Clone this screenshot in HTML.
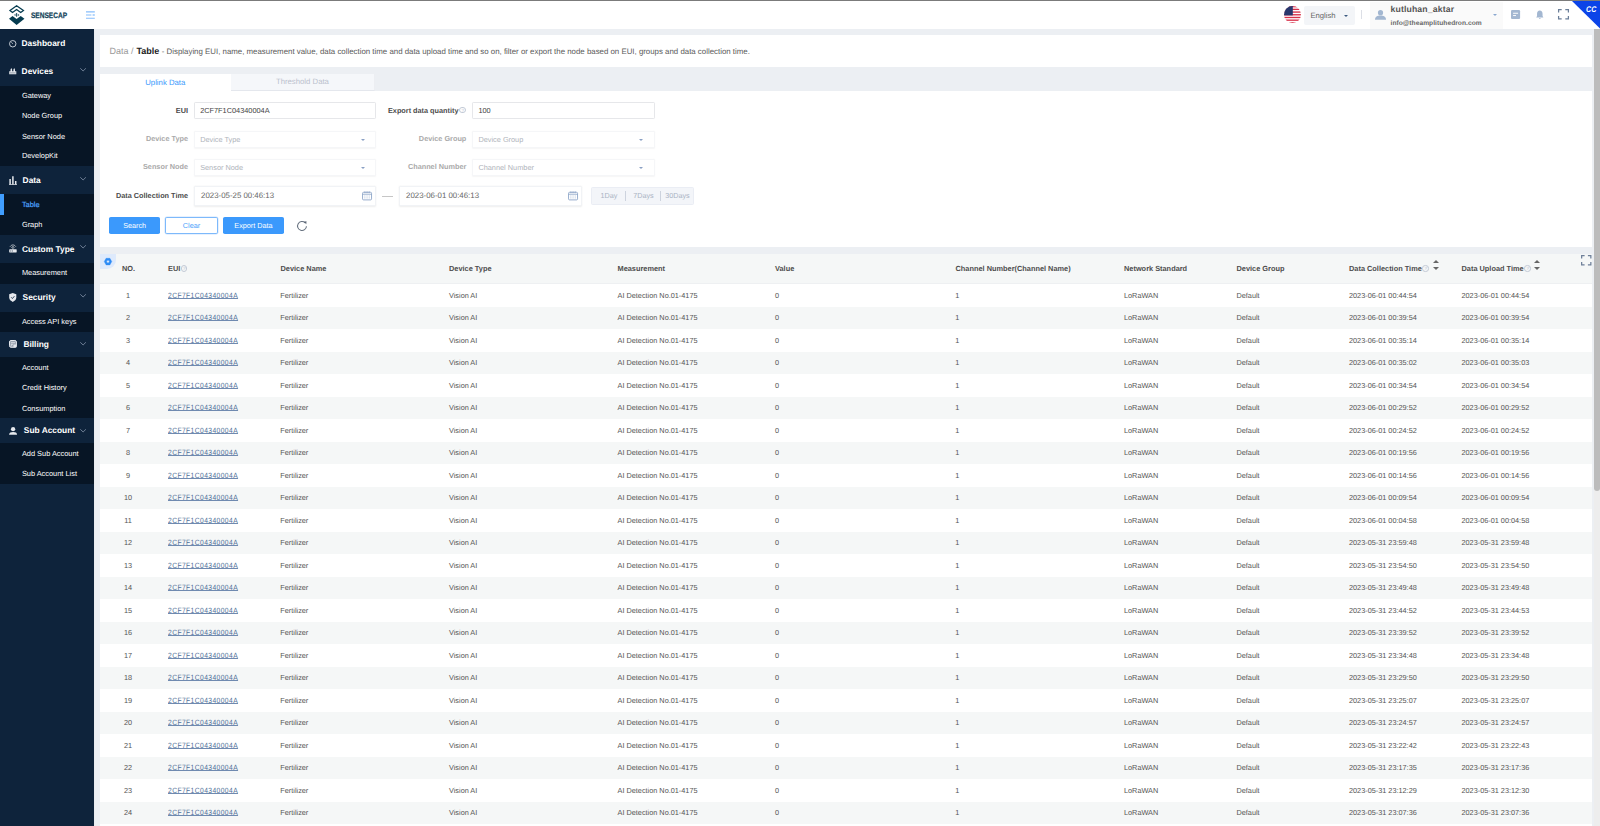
<!DOCTYPE html>
<html lang="en">
<head>
<meta charset="utf-8">
<title>SenseCAP - Data Table</title>
<style>
*{box-sizing:border-box;margin:0;padding:0}
html,body{width:1600px;height:826px;overflow:hidden;background:#eceff3;font-family:"Liberation Sans",sans-serif;font-size:8px;color:#555;text-rendering:geometricPrecision}
body{position:relative}
.abs{position:absolute}
svg{display:block;overflow:visible}
#topline{left:0;top:0;width:1600px;height:1px;background:#7b7b7b;z-index:3}
#header{left:0;top:1px;width:1600px;height:28.2px;background:#fff;z-index:2}
#sidebar{left:0;top:29px;width:93.75px;height:797px;background:#0e233b;color:#fff;box-shadow:0.3px 0 0.6px rgba(0,0,0,.35)}
#main{left:93.75px;top:29px;width:1500.25px;height:797px}
/* sidebar */
.mi{position:absolute;left:0;width:93.75px}
.mi .ic{position:absolute}
.mi .t{position:absolute;transform:translateY(-50%);font-weight:bold;font-size:8.4px;line-height:10px;white-space:nowrap}
.mi .ar{position:absolute}
.sub{position:absolute;left:0;width:93.75px;background:#071525}
.sub span{position:absolute;left:21.9px;transform:translateY(-50%);font-size:7.4px;line-height:9px;white-space:nowrap;color:#fff}
.sub span.act{color:#4da2ff;-webkit-text-stroke:0.2px #4da2ff}
.sub i{position:absolute;left:0;width:4.4px;background:#409eff}
/* header */
#logo{left:0;top:-1px}
#brand{left:31px;top:9.7px;font-family:"Liberation Sans",sans-serif;font-weight:bold;font-size:7.9px;line-height:9px;color:#14455a;-webkit-text-stroke:0.25px #14455a;letter-spacing:0;transform:scaleX(0.83);transform-origin:0 0;white-space:nowrap}
#burger{left:85.5px;top:10px}
#flag{left:1283.6px;top:5px;width:17.2px;height:17.2px;border-radius:50%;overflow:hidden}
#lang{left:1304px;top:5px;width:50.6px;height:19px;background:#f3f5f8;border-radius:2px}
#lang span{position:absolute;left:6.4px;top:4.8px;font-size:7.7px;color:#666}
#lang i{position:absolute;left:39.9px;top:8.9px;width:0;height:0;border-left:2.1px solid transparent;border-right:2.1px solid transparent;border-top:2.4px solid #3c5a80}
#hsep{left:1361px;top:9.2px;width:1px;height:8.5px;background:#dcdfe6}
#user{left:1369.5px;top:1px;width:133px;height:27px;background:#fafafa}
#user .av{position:absolute;left:5.5px;top:8.1px}
#user .n{position:absolute;left:21px;top:2.3px;font-size:8.66px;font-weight:bold;color:#555;white-space:nowrap;letter-spacing:0.15px}
#user .e{position:absolute;left:21px;top:17.8px;font-size:6.65px;font-weight:bold;color:#686868;white-space:nowrap;letter-spacing:0.04px}
#user i{position:absolute;left:123.1px;top:12.4px;width:0;height:0;border-left:2.2px solid transparent;border-right:2.2px solid transparent;border-top:2.4px solid #8aa8cf}
#hic1{left:1511px;top:9.4px}
#hic2{left:1536px;top:9.3px}
#hic3{left:1558px;top:8.2px}
#cc{left:1572px;top:0;width:28px;height:27.5px}
/* main */
#crumb{left:6.25px;top:6.25px;width:1492px;height:31.5px;background:#fff}
#crumb p{position:absolute;left:9.4px;top:10.8px;white-space:nowrap;font-size:7.87px;color:#5a5a5a}
#crumb p .g{color:#999;font-size:9px}
#crumb p b{color:#222;font-size:9px;margin-left:0.9px;margin-right:0.3px}
#card{left:6.25px;top:44.75px;width:1492px;height:173.5px;background:#fff}
#tabs{left:0;top:0;width:1492px;height:17px;background:#eceff3}
#tabs .t1{left:0;top:0;width:130.5px;height:17px;background:#fff;color:#3b99fc;text-align:center;line-height:18px;font-size:7.75px}
#tabs .t2{left:130.5px;top:0;width:144.9px;height:16.8px;background:#f5f7fa;border-bottom:1px solid #e4e7ed;border-right:1px solid #eceef2;color:#bac1cd;text-align:center;line-height:16.2px;font-size:7.75px}
.lbl{position:absolute;text-align:right;white-space:nowrap;font-size:7.3px;line-height:9px;color:#4c4c4c;font-weight:bold}
.lbl.d{color:#aaa}
.inp{position:absolute;background:#fff;border:1px solid #e6e7ea;border-radius:1.2px;font-size:7.35px;color:#444;white-space:nowrap}
.inp span{position:absolute;left:5.4px;top:50%;transform:translateY(-50%)}
.inp.d{border-color:#f5f6f8;color:#b0b4bb;box-shadow:0 0.5px 1.5px rgba(0,0,0,.04)}
.inp.d i{position:absolute;right:10.6px;top:50%;margin-top:-0.4px;width:0;height:0;border-left:2px solid transparent;border-right:2px solid transparent;border-top:2.2px solid #8aa0c4}
.inp.dt{border-color:#f1f3f6;color:#666;font-size:7.86px;box-shadow:0 0.7px 2px rgba(0,0,0,.07)}
.inp.dt svg{position:absolute;right:3.05px;top:50%;margin-top:-4.55px}
.btn{position:absolute;top:143.5px;height:16.9px;border-radius:1.8px;background:#3b99fc;color:#fff;text-align:center;line-height:18.8px;font-size:7.25px}
.btn.o{background:#fff;border:1px solid #7db9fb;color:#4a9ffb;line-height:16.8px;box-shadow:0 0 0 0.5px #cfe4fd}
#quick{left:490.75px;top:113.25px;width:103.5px;height:17.5px;background:#f3f5f9;border:1px solid #eaedf4;border-radius:1.5px;color:#aab4c4;font-size:7.2px}
#quick span{position:absolute;top:0;line-height:15.5px;text-align:center}
#quick u{position:absolute;top:2.8px;width:1px;height:10px;background:#cdd3de}
/* table */
#tbl{left:6.25px;top:225.25px;width:1492px;height:580px;background:#fff}
#th{left:0;top:0;width:1492px;height:30px;background:#f5f7f7;font-weight:bold;color:#4e4e4e;border-bottom:1px solid #eef0f2}
#th span{position:absolute;top:9.7px;white-space:nowrap;font-size:7.38px;line-height:9px}
.tr{position:relative;height:22.5px;width:1492px;background:#fff}
.tr.alt{background:#f5f7f7}
.tr span{position:absolute;top:6.5px;white-space:nowrap;font-size:7.3px;color:#555;line-height:9px}
.c0{left:15px;width:26px;text-align:center}
.c1{left:67.8px}
.c1 a{font-family:"Liberation Sans",sans-serif;display:inline-block;transform:scaleX(0.88);transform-origin:0 50%;font-size:7.6px;letter-spacing:0.49px;color:#4f6f98;text-decoration:underline;text-underline-offset:0.3px;text-decoration-thickness:0.5px;text-decoration-color:#6f8ab0}
.c2{left:180.3px}.c3{left:349px}.c4{left:517.6px}.c5{left:675px}.c6{left:855.3px}.c7{left:1024px}.c8{left:1136.5px}.c9{left:1249px}.c10{left:1361.5px}
#gear{left:0;top:0;width:15.8px;height:14.8px;background:#deeafc;border-radius:0 0 9px 0}
#fs{left:1481.4px;top:0.3px}
.q{display:inline-block;width:6.4px;height:6.4px;border:0.7px solid #c3cad6;border-radius:50%;vertical-align:-0.9px;margin-left:0.5px;position:relative}
.q.abs{position:absolute}
.q:after{content:"?";position:absolute;left:0;top:0;width:5px;text-align:center;font-size:4.6px;line-height:5.2px;color:#c3cad6;font-weight:normal;letter-spacing:0}
.sort{position:absolute;width:5px}
.sort:before,.sort:after{content:"";position:absolute;left:0;width:0;height:0;border-left:3.3px solid transparent;border-right:3.3px solid transparent}
.sort:before{top:0;border-bottom:3.8px solid #666}
.sort:after{top:6.6px;border-top:3.8px solid #666}
#sbar{width:6px;height:797px;background:#ededed}
#sbar div{position:absolute;left:0;top:0;width:6px;height:462px;background:#bcbcbc;border-radius:0 0 3px 3px}

</style>
</head>
<body>
<div id="topline" class="abs"></div>
<div id="header" class="abs">
  <svg id="logo" class="abs" width="30" height="30" viewBox="0 0 30 30">
    <path d="M16.6 5.75 L23.45 10.5 L20.7 12.45 L16.6 9.45 L12.5 12.45 L9.95 10.5 Z" fill="none" stroke="#063c50" stroke-width="1.25" stroke-linejoin="miter"/>
    <path d="M16.65 13.05V16.75" stroke="#063c50" stroke-width="0.95" fill="none"/>
    <path d="M15.6 13.8V16" stroke="#063c50" stroke-width="0.45" fill="none"/>
    <path d="M14.95 14.2V15.6L14 14.9ZM17.8 13.9V15.9L19.5 14.9Z" fill="#063c50"/>
    <path d="M9 18.7 L12.5 16 L16.6 19 L20.7 16 L24.46 18.7 L16.6 25 Z" fill="#063c50"/>
  </svg>
  <div id="brand" class="abs">SENSECAP</div>
  <svg id="burger" class="abs" width="9" height="8" viewBox="0 0 9 8">
    <path d="M0 0.8h8.8M0 4h5.4M0 7.2h8.8" stroke="#86bdfb" stroke-width="1.15" fill="none"/>
    <path d="M6.6 4h2.2" stroke="#86bdfb" stroke-width="1.3" fill="none"/>
  </svg>
  <div id="flag" class="abs">
    <svg width="17.5" height="17.5" viewBox="0 0 17.5 17.5">
      <rect width="17.5" height="17.5" fill="#fff"/>
      <g fill="#d8304a">
        <rect y="0" width="17.5" height="1.35"/><rect y="2.7" width="17.5" height="1.35"/><rect y="5.4" width="17.5" height="1.35"/><rect y="8.1" width="17.5" height="1.35"/><rect y="10.8" width="17.5" height="1.35"/><rect y="13.5" width="17.5" height="1.35"/><rect y="16.2" width="17.5" height="1.35"/>
      </g>
      <rect width="8.8" height="9.4" fill="#27376d"/>
    </svg>
  </div>
  <div id="lang" class="abs"><span>English</span><i></i></div>
  <div id="hsep" class="abs"></div>
  <div id="user" class="abs">
    <svg class="av" width="11" height="10" viewBox="0 0 11 10"><circle cx="5.5" cy="2.7" r="2.6" fill="#a3b7d1"/><path d="M0 9.8C0 6.6 2.4 5.6 5.5 5.6S11 6.6 11 9.8Z" fill="#a3b7d1"/></svg>
    <div class="n">kutluhan_aktar</div>
    <div class="e">info@theamplituhedron.com</div>
    <i></i>
  </div>
  <svg id="hic1" class="abs" width="9.1" height="9.1" viewBox="0 0 9.5 9.5"><rect width="9.5" height="9.5" rx="1.2" fill="#a3b7d1"/><path d="M2.2 3.4h5.2M2.2 5.8h3" stroke="#fff" stroke-width="1" fill="none"/></svg>
  <svg id="hic2" class="abs" width="7.6" height="10" viewBox="0 0 8 10"><path d="M4 0.3C2.1 0.3 1.1 1.8 1.1 3.6V6L0.2 7.6H7.8L6.9 6V3.6C6.9 1.8 5.9 0.3 4 0.3Z" fill="#a3b7d1"/><path d="M3.1 8.3h1.8a0.9 0.9 0 0 1-1.8 0Z" fill="#a3b7d1"/></svg>
  <svg id="hic3" class="abs" width="11" height="10.5" viewBox="0 0 11 10.5"><path d="M0.6 3.4V0.6H3.7M7.3 0.6H10.4V3.4M10.4 7.1V9.9H7.3M3.7 9.9H0.6V7.1" stroke="#6b7f99" stroke-width="1.25" fill="none"/></svg>
  <svg id="cc" class="abs" width="28" height="27.5" viewBox="0 0 28 27.5"><path d="M0 0H28V27.5Z" fill="#0b44e8"/><text x="14.1" y="10.6" font-family="Liberation Sans, sans-serif" font-size="8.3" font-weight="bold" font-style="italic" fill="#fff" textLength="10.2" lengthAdjust="spacingAndGlyphs">CC</text></svg>
</div>

<div id="sidebar" class="abs">
  <div class="mi" style="top:0.00px;height:28.40px"><svg class="ic" style="left:8.6px;top:10.80px" width="7.5" height="7.5" viewBox="0 0 7.2 7.2"><circle cx="3.6" cy="3.6" r="3.1" fill="none" stroke="#e6e9ee" stroke-width="0.8"/><path d="M2.3 2.2L3.7 3.7" stroke="#e6e9ee" stroke-width="0.7"/></svg><span class="t" style="left:21.5px;top:14.30px">Dashboard</span></div>
  <div class="mi" style="top:28.40px;height:28.50px"><svg class="ic" style="left:8.9px;top:10.70px" width="7.5" height="6.4" viewBox="0 0 7.5 6.4"><path d="M0.2 6.3V3.3H7.3V6.3ZM1.5 3.3V1.4L2.3 0.1L3.1 1.4V3.3ZM4.4 3.3V1.4L5.2 0.1L6 1.4V3.3Z" fill="#e6e9ee"/><path d="M0.8 4.9H6.7" stroke="#0e233b" stroke-width="0.4"/></svg><span class="t" style="left:21.6px;top:13.90px">Devices</span><svg class="ar" style="left:79.7px;top:10.70px" width="6.2" height="3.5" viewBox="0 0 6.2 3.5"><path d="M0.3 0.3L3.1 3L5.9 0.3" stroke="#8e9db2" stroke-width="0.75" fill="none"/></svg></div>
  <div class="mi" style="top:137.00px;height:28.30px"><svg class="ic" style="left:8.8px;top:9.90px" width="8" height="9" viewBox="0 0 8 9"><path d="M1.1 3V8.4M3.9 0.2V8.4M6.7 5V8.4" stroke="#e6e9ee" stroke-width="1.5" fill="none"/><path d="M0 8.5H8" stroke="#e6e9ee" stroke-width="0.7"/></svg><span class="t" style="left:22.6px;top:14.20px">Data</span><svg class="ar" style="left:79.7px;top:10.70px" width="6.2" height="3.5" viewBox="0 0 6.2 3.5"><path d="M0.3 0.3L3.1 3L5.9 0.3" stroke="#8e9db2" stroke-width="0.75" fill="none"/></svg></div>
  <div class="mi" style="top:205.80px;height:28.05px"><svg class="ic" style="left:8.5px;top:9.50px" width="7.9" height="8.8" viewBox="0 0 7.9 8.8"><path d="M1.1 2.6C2.7 0.4 5.2 0.4 6.8 2.6M2.4 3.6C3.3 2.4 4.6 2.4 5.5 3.6" stroke="#e6e9ee" stroke-width="0.75" fill="none"/><path d="M3.95 3.4V5.4" stroke="#e6e9ee" stroke-width="0.8"/><rect x="0.2" y="5.3" width="7.5" height="3.3" rx="0.5" fill="#e6e9ee"/><path d="M1.2 7H2.2M2.9 7H3.9" stroke="#0e233b" stroke-width="0.7"/></svg><span class="t" style="left:22.0px;top:14.20px">Custom Type</span><svg class="ar" style="left:79.7px;top:10.70px" width="6.2" height="3.5" viewBox="0 0 6.2 3.5"><path d="M0.3 0.3L3.1 3L5.9 0.3" stroke="#8e9db2" stroke-width="0.75" fill="none"/></svg></div>
  <div class="mi" style="top:254.80px;height:28.20px"><svg class="ic" style="left:8.7px;top:9.20px" width="7.5" height="9" viewBox="0 0 7.5 9"><path d="M3.75 0.1L7.3 1.3V4.6C7.3 6.7 5.6 8.1 3.75 8.9C1.9 8.1 0.2 6.7 0.2 4.6V1.3Z" fill="#e6e9ee"/><path d="M2.2 4.3L3.4 5.5L5.4 3.2" stroke="#0e233b" stroke-width="0.85" fill="none"/></svg><span class="t" style="left:22.6px;top:13.50px">Security</span><svg class="ar" style="left:79.7px;top:10.10px" width="6.2" height="3.5" viewBox="0 0 6.2 3.5"><path d="M0.3 0.3L3.1 3L5.9 0.3" stroke="#8e9db2" stroke-width="0.75" fill="none"/></svg></div>
  <div class="mi" style="top:302.80px;height:25.40px"><svg class="ic" style="left:9.1px;top:8.40px" width="7.9" height="7.8" viewBox="0 0 7.9 7.8"><rect x="0.5" y="0.5" width="6.9" height="6.8" rx="1.5" fill="#9aa4b1" stroke="#e6e9ee" stroke-width="1"/><path d="M2 2.7H6M2 4.3H4" stroke="#e6e9ee" stroke-width="0.8"/><rect x="4.5" y="4.5" width="3" height="2.9" fill="#e6e9ee"/><path d="M2.3 4.3V6.2" stroke="#e6e9ee" stroke-width="0.7"/></svg><span class="t" style="left:23.4px;top:12.20px">Billing</span><svg class="ar" style="left:79.7px;top:10.40px" width="6.2" height="3.5" viewBox="0 0 6.2 3.5"><path d="M0.3 0.3L3.1 3L5.9 0.3" stroke="#8e9db2" stroke-width="0.75" fill="none"/></svg></div>
  <div class="mi" style="top:388.90px;height:25.50px"><svg class="ic" style="left:8.8px;top:8.80px" width="8.2" height="7.8" viewBox="0 0 8.2 7.8"><circle cx="4.1" cy="2.2" r="2.15" fill="#e6e9ee"/><path d="M0.1 7.7C0.1 5.6 1.8 4.9 4.1 4.9S8.1 5.6 8.1 7.7Z" fill="#e6e9ee"/></svg><span class="t" style="left:23.8px;top:12.40px">Sub Account</span><svg class="ar" style="left:79.9px;top:10.70px" width="6.2" height="3.5" viewBox="0 0 6.2 3.5"><path d="M0.3 0.3L3.1 3L5.9 0.3" stroke="#8e9db2" stroke-width="0.75" fill="none"/></svg></div>
  <div class="sub" style="top:56.90px;height:80.10px">
    <span style="top:9.10px">Gateway</span>
    <span style="top:29.10px">Node Group</span>
    <span style="top:50.00px">Sensor Node</span>
    <span style="top:69.40px">DevelopKit</span>
  </div>
  <div class="sub" style="top:165.30px;height:40.50px">
    <i style="top:0;height:20.25px"></i><span class="act" style="top:9.60px">Table</span>
    <span style="top:30.20px">Graph</span>
  </div>
  <div class="sub" style="top:233.85px;height:20.95px">
    <span style="top:9.65px">Measurement</span>
  </div>
  <div class="sub" style="top:283.00px;height:19.80px">
    <span style="top:9.40px">Access API keys</span>
  </div>
  <div class="sub" style="top:328.20px;height:60.70px">
    <span style="top:10.20px">Account</span>
    <span style="top:29.90px">Credit History</span>
    <span style="top:50.80px">Consumption</span>
  </div>
  <div class="sub" style="top:414.40px;height:40.30px">
    <span style="top:9.80px">Add Sub Account</span>
    <span style="top:29.80px">Sub Account List</span>
  </div>
</div>

<div id="main" class="abs">
  <div id="crumb" class="abs"><p><span class="g">Data /</span> <b>Table</b> - Displaying EUI, name, measurement value, data collection time and data upload time and so on, filter or export the node based on EUI, groups and data collection time.</p></div>
  <div id="card" class="abs">
    <div id="tabs" class="abs"><div class="t1 abs">Uplink Data</div><div class="t2 abs">Threshold Data</div></div>
    <div class="lbl" style="right:1404px;top:31.8px">EUI</div>
    <div class="inp" style="left:93.75px;top:28.5px;width:182.7px;height:16.25px"><span>2CF7F1C04340004A</span></div>
    <div class="lbl" style="right:1133.5px;top:31.8px">Export data quantity</div>
    <div class="q abs" style="left:359.3px;top:33.1px;margin:0"></div>
    <div class="inp" style="left:372px;top:28px;width:183px;height:17px"><span>100</span></div>

    <div class="lbl d" style="right:1404px;top:60.2px">Device Type</div>
    <div class="inp d" style="left:93.75px;top:57px;width:182.7px;height:17.4px"><span>Device Type</span><i></i></div>
    <div class="lbl d" style="right:1125.7px;top:60.2px">Device Group</div>
    <div class="inp d" style="left:372px;top:56.9px;width:183px;height:17.6px"><span>Device Group</span><i></i></div>

    <div class="lbl d" style="right:1404px;top:88.7px">Sensor Node</div>
    <div class="inp d" style="left:93.75px;top:84.9px;width:182.7px;height:17.4px"><span>Sensor Node</span><i></i></div>
    <div class="lbl d" style="right:1125.7px;top:88.7px">Channel Number</div>
    <div class="inp d" style="left:372px;top:84.9px;width:183px;height:17.6px"><span>Channel Number</span><i></i></div>

    <div class="lbl" style="right:1404px;top:117.2px">Data Collection Time</div>
    <div class="inp dt" style="left:93.75px;top:112.7px;width:182.7px;height:19.1px"><span style="left:6.3px;margin-top:-0.5px">2023-05-25 00:46:13</span><svg width="10.1" height="9.5" viewBox="0 0 10.1 9.5"><rect x="0.55" y="1.3" width="9" height="7.6" rx="1" fill="none" stroke="#8ba4c7" stroke-width="0.9"/><path d="M0.55 3.25H9.55" stroke="#8ba4c7" stroke-width="0.8"/><path d="M2.9 0.2V2.2M5.05 0.2V2.2M7.2 0.2V2.2" stroke="#8ba4c7" stroke-width="0.7"/><path d="M2.5 5H3.3M4.65 5H5.45M6.8 5H7.6M2.5 6.9H3.3M4.65 6.9H5.45M6.8 6.9H7.6" stroke="#8ba4c7" stroke-width="0.8"/></svg></div>
    <div class="abs" style="left:281.9px;top:121.85px;width:11.1px;height:1.25px;background:#c6c6c6"></div>
    <div class="inp dt" style="left:298.75px;top:112.7px;width:183px;height:19.1px"><span style="left:6.3px;margin-top:-0.5px">2023-06-01 00:46:13</span><svg width="10.1" height="9.5" viewBox="0 0 10.1 9.5"><rect x="0.55" y="1.3" width="9" height="7.6" rx="1" fill="none" stroke="#8ba4c7" stroke-width="0.9"/><path d="M0.55 3.25H9.55" stroke="#8ba4c7" stroke-width="0.8"/><path d="M2.9 0.2V2.2M5.05 0.2V2.2M7.2 0.2V2.2" stroke="#8ba4c7" stroke-width="0.7"/><path d="M2.5 5H3.3M4.65 5H5.45M6.8 5H7.6M2.5 6.9H3.3M4.65 6.9H5.45M6.8 6.9H7.6" stroke="#8ba4c7" stroke-width="0.8"/></svg></div>
    <div id="quick" class="abs"><span style="left:0;width:34.5px">1Day</span><u style="left:33.6px"></u><span style="left:34.5px;width:34.3px">7Days</span><u style="left:67.8px"></u><span style="left:68.8px;width:33.7px">30Days</span></div>

    <div class="btn" style="left:9.25px;width:50.75px">Search</div>
    <div class="btn o" style="left:65.25px;width:52.5px">Clear</div>
    <div class="btn" style="left:123px;width:61px">Export Data</div>
    <svg class="abs" style="left:195.7px;top:146.3px" width="12" height="12" viewBox="0 0 12 12"><path d="M9.15 2.85A4.45 4.45 0 1 0 10.45 6.2" stroke="#66717f" stroke-width="1.05" fill="none"/><path d="M7.7 1.7L10.5 1.3L10.3 4.2Z" fill="#5b6675"/></svg>
  </div>
  <div id="tbl" class="abs">
    <div id="th" class="abs">
      <span style="left:22px">NO.</span>
      <span style="left:68px">EUI<i class="q"></i></span>
      <span style="left:180.5px">Device Name</span>
      <span style="left:349px">Device Type</span>
      <span style="left:517.5px">Measurement</span>
      <span style="left:675px">Value</span>
      <span style="left:855.5px">Channel Number(Channel Name)</span>
      <span style="left:1024px">Network Standard</span>
      <span style="left:1136.5px">Device Group</span>
      <span style="left:1249px">Data Collection Time<i class="q"></i></span>
      <span style="left:1361.5px">Data Upload Time<i class="q"></i></span>
      <div class="sort" style="left:1332.6px;top:6.1px"></div>
      <div class="sort" style="left:1434.35px;top:6.1px"></div>
    </div>
    <div id="gear" class="abs"><svg class="abs" style="left:4.1px;top:3.8px" width="8" height="7.2" viewBox="0 0 8 7.2"><path d="M0.25 3.6L2.1 0.3H5.9L7.75 3.6L5.9 6.9H2.1Z M4 2.2A1.4 1.4 0 1 0 4 5A1.4 1.4 0 1 0 4 2.2Z" fill="#2d8cf5" fill-rule="evenodd" stroke="#2d8cf5" stroke-width="0.4" stroke-linejoin="round"/></svg></div>
    <svg id="fs" class="abs" width="10.5" height="10.5" viewBox="0 0 10.5 10.5"><path d="M0.65 3.4V0.65H3.6M6.9 0.65H9.85V3.4M9.85 7.1V9.85H6.9M3.6 9.85H0.65V7.1" stroke="#6e7f99" stroke-width="1.25" fill="none"/></svg>
    <div class="abs" style="left:0;top:30px">
<div class="tr"><span class="c0">1</span><span class="c1"><a>2CF7F1C04340004A</a></span><span class="c2">Fertilizer</span><span class="c3">Vision AI</span><span class="c4">AI Detection No.01-4175</span><span class="c5">0</span><span class="c6">1</span><span class="c7">LoRaWAN</span><span class="c8">Default</span><span class="c9">2023-06-01 00:44:54</span><span class="c10">2023-06-01 00:44:54</span></div>
<div class="tr alt"><span class="c0">2</span><span class="c1"><a>2CF7F1C04340004A</a></span><span class="c2">Fertilizer</span><span class="c3">Vision AI</span><span class="c4">AI Detection No.01-4175</span><span class="c5">0</span><span class="c6">1</span><span class="c7">LoRaWAN</span><span class="c8">Default</span><span class="c9">2023-06-01 00:39:54</span><span class="c10">2023-06-01 00:39:54</span></div>
<div class="tr"><span class="c0">3</span><span class="c1"><a>2CF7F1C04340004A</a></span><span class="c2">Fertilizer</span><span class="c3">Vision AI</span><span class="c4">AI Detection No.01-4175</span><span class="c5">0</span><span class="c6">1</span><span class="c7">LoRaWAN</span><span class="c8">Default</span><span class="c9">2023-06-01 00:35:14</span><span class="c10">2023-06-01 00:35:14</span></div>
<div class="tr alt"><span class="c0">4</span><span class="c1"><a>2CF7F1C04340004A</a></span><span class="c2">Fertilizer</span><span class="c3">Vision AI</span><span class="c4">AI Detection No.01-4175</span><span class="c5">0</span><span class="c6">1</span><span class="c7">LoRaWAN</span><span class="c8">Default</span><span class="c9">2023-06-01 00:35:02</span><span class="c10">2023-06-01 00:35:03</span></div>
<div class="tr"><span class="c0">5</span><span class="c1"><a>2CF7F1C04340004A</a></span><span class="c2">Fertilizer</span><span class="c3">Vision AI</span><span class="c4">AI Detection No.01-4175</span><span class="c5">0</span><span class="c6">1</span><span class="c7">LoRaWAN</span><span class="c8">Default</span><span class="c9">2023-06-01 00:34:54</span><span class="c10">2023-06-01 00:34:54</span></div>
<div class="tr alt"><span class="c0">6</span><span class="c1"><a>2CF7F1C04340004A</a></span><span class="c2">Fertilizer</span><span class="c3">Vision AI</span><span class="c4">AI Detection No.01-4175</span><span class="c5">0</span><span class="c6">1</span><span class="c7">LoRaWAN</span><span class="c8">Default</span><span class="c9">2023-06-01 00:29:52</span><span class="c10">2023-06-01 00:29:52</span></div>
<div class="tr"><span class="c0">7</span><span class="c1"><a>2CF7F1C04340004A</a></span><span class="c2">Fertilizer</span><span class="c3">Vision AI</span><span class="c4">AI Detection No.01-4175</span><span class="c5">0</span><span class="c6">1</span><span class="c7">LoRaWAN</span><span class="c8">Default</span><span class="c9">2023-06-01 00:24:52</span><span class="c10">2023-06-01 00:24:52</span></div>
<div class="tr alt"><span class="c0">8</span><span class="c1"><a>2CF7F1C04340004A</a></span><span class="c2">Fertilizer</span><span class="c3">Vision AI</span><span class="c4">AI Detection No.01-4175</span><span class="c5">0</span><span class="c6">1</span><span class="c7">LoRaWAN</span><span class="c8">Default</span><span class="c9">2023-06-01 00:19:56</span><span class="c10">2023-06-01 00:19:56</span></div>
<div class="tr"><span class="c0">9</span><span class="c1"><a>2CF7F1C04340004A</a></span><span class="c2">Fertilizer</span><span class="c3">Vision AI</span><span class="c4">AI Detection No.01-4175</span><span class="c5">0</span><span class="c6">1</span><span class="c7">LoRaWAN</span><span class="c8">Default</span><span class="c9">2023-06-01 00:14:56</span><span class="c10">2023-06-01 00:14:56</span></div>
<div class="tr alt"><span class="c0">10</span><span class="c1"><a>2CF7F1C04340004A</a></span><span class="c2">Fertilizer</span><span class="c3">Vision AI</span><span class="c4">AI Detection No.01-4175</span><span class="c5">0</span><span class="c6">1</span><span class="c7">LoRaWAN</span><span class="c8">Default</span><span class="c9">2023-06-01 00:09:54</span><span class="c10">2023-06-01 00:09:54</span></div>
<div class="tr"><span class="c0">11</span><span class="c1"><a>2CF7F1C04340004A</a></span><span class="c2">Fertilizer</span><span class="c3">Vision AI</span><span class="c4">AI Detection No.01-4175</span><span class="c5">0</span><span class="c6">1</span><span class="c7">LoRaWAN</span><span class="c8">Default</span><span class="c9">2023-06-01 00:04:58</span><span class="c10">2023-06-01 00:04:58</span></div>
<div class="tr alt"><span class="c0">12</span><span class="c1"><a>2CF7F1C04340004A</a></span><span class="c2">Fertilizer</span><span class="c3">Vision AI</span><span class="c4">AI Detection No.01-4175</span><span class="c5">0</span><span class="c6">1</span><span class="c7">LoRaWAN</span><span class="c8">Default</span><span class="c9">2023-05-31 23:59:48</span><span class="c10">2023-05-31 23:59:48</span></div>
<div class="tr"><span class="c0">13</span><span class="c1"><a>2CF7F1C04340004A</a></span><span class="c2">Fertilizer</span><span class="c3">Vision AI</span><span class="c4">AI Detection No.01-4175</span><span class="c5">0</span><span class="c6">1</span><span class="c7">LoRaWAN</span><span class="c8">Default</span><span class="c9">2023-05-31 23:54:50</span><span class="c10">2023-05-31 23:54:50</span></div>
<div class="tr alt"><span class="c0">14</span><span class="c1"><a>2CF7F1C04340004A</a></span><span class="c2">Fertilizer</span><span class="c3">Vision AI</span><span class="c4">AI Detection No.01-4175</span><span class="c5">0</span><span class="c6">1</span><span class="c7">LoRaWAN</span><span class="c8">Default</span><span class="c9">2023-05-31 23:49:48</span><span class="c10">2023-05-31 23:49:48</span></div>
<div class="tr"><span class="c0">15</span><span class="c1"><a>2CF7F1C04340004A</a></span><span class="c2">Fertilizer</span><span class="c3">Vision AI</span><span class="c4">AI Detection No.01-4175</span><span class="c5">0</span><span class="c6">1</span><span class="c7">LoRaWAN</span><span class="c8">Default</span><span class="c9">2023-05-31 23:44:52</span><span class="c10">2023-05-31 23:44:53</span></div>
<div class="tr alt"><span class="c0">16</span><span class="c1"><a>2CF7F1C04340004A</a></span><span class="c2">Fertilizer</span><span class="c3">Vision AI</span><span class="c4">AI Detection No.01-4175</span><span class="c5">0</span><span class="c6">1</span><span class="c7">LoRaWAN</span><span class="c8">Default</span><span class="c9">2023-05-31 23:39:52</span><span class="c10">2023-05-31 23:39:52</span></div>
<div class="tr"><span class="c0">17</span><span class="c1"><a>2CF7F1C04340004A</a></span><span class="c2">Fertilizer</span><span class="c3">Vision AI</span><span class="c4">AI Detection No.01-4175</span><span class="c5">0</span><span class="c6">1</span><span class="c7">LoRaWAN</span><span class="c8">Default</span><span class="c9">2023-05-31 23:34:48</span><span class="c10">2023-05-31 23:34:48</span></div>
<div class="tr alt"><span class="c0">18</span><span class="c1"><a>2CF7F1C04340004A</a></span><span class="c2">Fertilizer</span><span class="c3">Vision AI</span><span class="c4">AI Detection No.01-4175</span><span class="c5">0</span><span class="c6">1</span><span class="c7">LoRaWAN</span><span class="c8">Default</span><span class="c9">2023-05-31 23:29:50</span><span class="c10">2023-05-31 23:29:50</span></div>
<div class="tr"><span class="c0">19</span><span class="c1"><a>2CF7F1C04340004A</a></span><span class="c2">Fertilizer</span><span class="c3">Vision AI</span><span class="c4">AI Detection No.01-4175</span><span class="c5">0</span><span class="c6">1</span><span class="c7">LoRaWAN</span><span class="c8">Default</span><span class="c9">2023-05-31 23:25:07</span><span class="c10">2023-05-31 23:25:07</span></div>
<div class="tr alt"><span class="c0">20</span><span class="c1"><a>2CF7F1C04340004A</a></span><span class="c2">Fertilizer</span><span class="c3">Vision AI</span><span class="c4">AI Detection No.01-4175</span><span class="c5">0</span><span class="c6">1</span><span class="c7">LoRaWAN</span><span class="c8">Default</span><span class="c9">2023-05-31 23:24:57</span><span class="c10">2023-05-31 23:24:57</span></div>
<div class="tr"><span class="c0">21</span><span class="c1"><a>2CF7F1C04340004A</a></span><span class="c2">Fertilizer</span><span class="c3">Vision AI</span><span class="c4">AI Detection No.01-4175</span><span class="c5">0</span><span class="c6">1</span><span class="c7">LoRaWAN</span><span class="c8">Default</span><span class="c9">2023-05-31 23:22:42</span><span class="c10">2023-05-31 23:22:43</span></div>
<div class="tr alt"><span class="c0">22</span><span class="c1"><a>2CF7F1C04340004A</a></span><span class="c2">Fertilizer</span><span class="c3">Vision AI</span><span class="c4">AI Detection No.01-4175</span><span class="c5">0</span><span class="c6">1</span><span class="c7">LoRaWAN</span><span class="c8">Default</span><span class="c9">2023-05-31 23:17:35</span><span class="c10">2023-05-31 23:17:36</span></div>
<div class="tr"><span class="c0">23</span><span class="c1"><a>2CF7F1C04340004A</a></span><span class="c2">Fertilizer</span><span class="c3">Vision AI</span><span class="c4">AI Detection No.01-4175</span><span class="c5">0</span><span class="c6">1</span><span class="c7">LoRaWAN</span><span class="c8">Default</span><span class="c9">2023-05-31 23:12:29</span><span class="c10">2023-05-31 23:12:30</span></div>
<div class="tr alt"><span class="c0">24</span><span class="c1"><a>2CF7F1C04340004A</a></span><span class="c2">Fertilizer</span><span class="c3">Vision AI</span><span class="c4">AI Detection No.01-4175</span><span class="c5">0</span><span class="c6">1</span><span class="c7">LoRaWAN</span><span class="c8">Default</span><span class="c9">2023-05-31 23:07:36</span><span class="c10">2023-05-31 23:07:36</span></div>
    </div>
  </div>
  <div id="sbar" class="abs" style="left:1500.25px;top:0"><div></div></div>
</div>

</body>
</html>
